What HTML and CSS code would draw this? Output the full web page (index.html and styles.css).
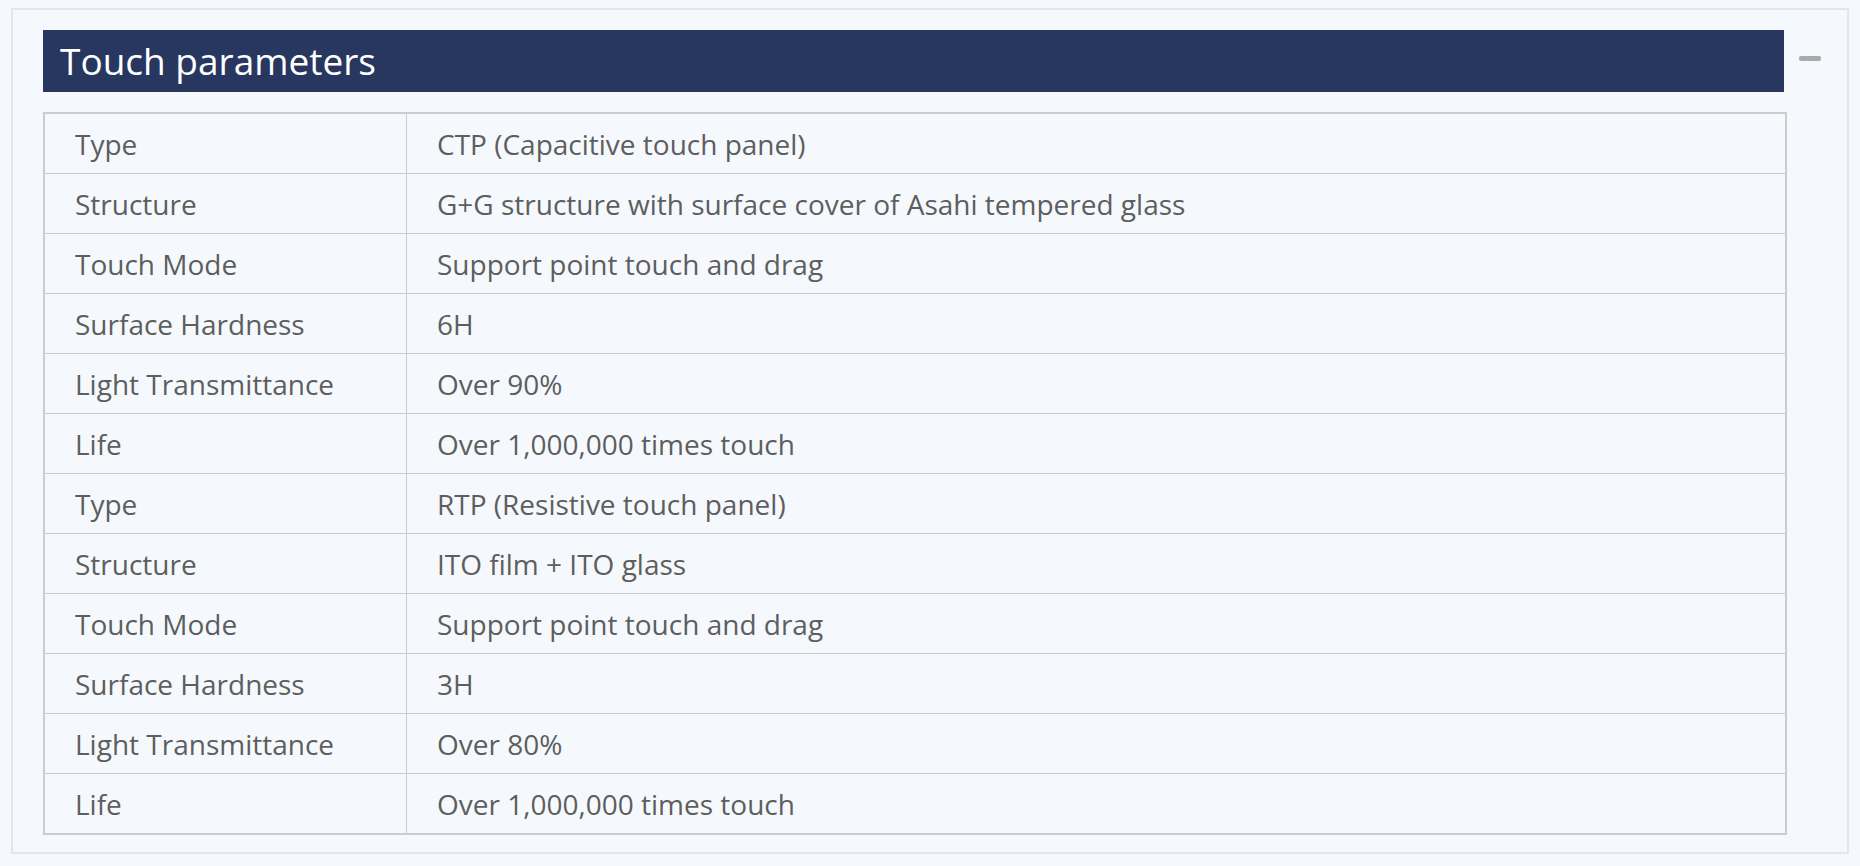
FILE: index.html
```html
<!DOCTYPE html>
<html>
<head>
<meta charset="utf-8">
<link rel="stylesheet" href="styles.css">
</head>
<body>
<div class="panel">
  <div class="main">
    <div class="title">Touch parameters</div>
    <table class="params">
      <tr><td class="k">Type</td><td>CTP (Capacitive touch panel)</td></tr>
      <tr><td class="k">Structure</td><td>G+G structure with surface cover of Asahi tempered glass</td></tr>
      <tr><td class="k">Touch Mode</td><td>Support point touch and drag</td></tr>
      <tr><td class="k">Surface Hardness</td><td>6H</td></tr>
      <tr><td class="k">Light Transmittance</td><td>Over 90%</td></tr>
      <tr><td class="k">Life</td><td>Over 1,000,000 times touch</td></tr>
      <tr><td class="k">Type</td><td>RTP (Resistive touch panel)</td></tr>
      <tr><td class="k">Structure</td><td>ITO film + ITO glass</td></tr>
      <tr><td class="k">Touch Mode</td><td>Support point touch and drag</td></tr>
      <tr><td class="k">Surface Hardness</td><td>3H</td></tr>
      <tr><td class="k">Light Transmittance</td><td>Over 80%</td></tr>
      <tr><td class="k">Life</td><td>Over 1,000,000 times touch</td></tr>
    </table>
  </div>
  <div class="side"><span class="minus"></span></div>
</div>
</body>
</html>
```
FILE: styles.css
```css
html, body {
  margin: 0;
  padding: 0;
  background: #f5f9fd;
}
body {
  padding: 8px 11px 0 11px;
  font-family: "Open Sans", "Noto Sans", sans-serif;
}
.panel {
  display: flex;
  border: 2px solid #e2e6ea;
  height: 846px;
  box-sizing: border-box;
  padding: 20px 0 0 30px;
  background: #f5f9fd;
}
.main {
  width: 1744px;
}
.title {
  width: 1741px;
  height: 62px;
  background: #28375f;
  color: #fff;
  font-size: 37px;
  line-height: 62px;
  padding-left: 17px;
  box-sizing: border-box;
}
.params {
  margin-top: 20px;
  width: 1744px;
  border-collapse: collapse;
  border: 2px solid #cccccc;
  color: #5e5e5e;
  font-size: 28px;
}
.params td {
  height: 59px;
  padding: 0 0 0 30px;
  border: 1.5px solid #cccccc;
  vertical-align: middle;
  line-height: 1;
}
.params td.k {
  width: 331px;
  padding-left: 30px;
}
.side {
  padding: 26px 0 0 12px;
}
.minus {
  display: block;
  width: 22px;
  height: 5px;
  border-radius: 2px;
  background: #aaaaaa;
}
```
